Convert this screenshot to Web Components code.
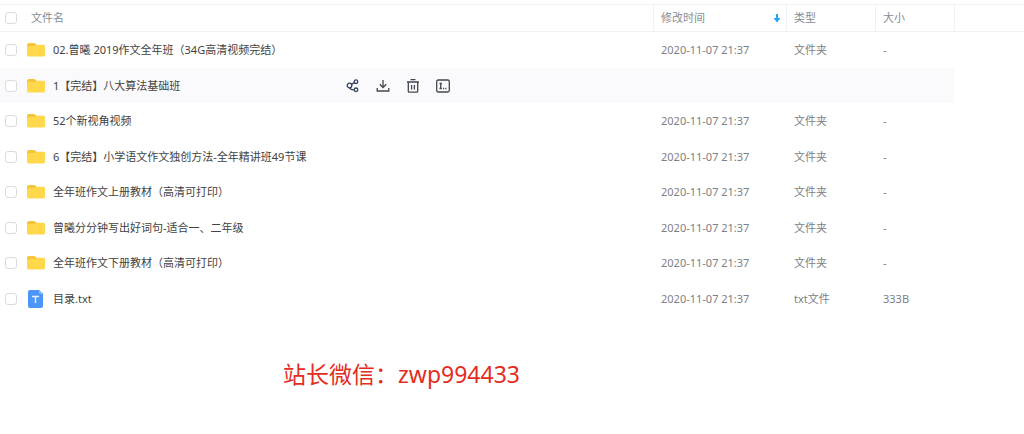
<!DOCTYPE html>
<html lang="zh-CN">
<head>
	<meta charset="utf-8">
	<meta name="viewport" content="width=device-width, initial-scale=1">
	<title>文件列表</title>
	<style>
		body {
			margin: 0;
			padding-top: 4px;
			background: #fff;
			color: #424242;
			font: 11px/16px "Noto Sans", "Noto Sans CJK SC", sans-serif;
		}
	</style>
</head>
<body>
	<uc-file-list></uc-file-list>
	<uc-contact-note>站长微信：zwp994433</uc-contact-note>

	<script>
		const files = [
			{ name: '02.曾曦 2019作文全年班（34G高清视频完结）', kind: 'folder' },
			{ name: '1【完结】八大算法基础班', kind: 'folder', active: true },
			{ name: '52个新视角视频', kind: 'folder' },
			{ name: '6【完结】小学语文作文独创方法-全年精讲班49节课', kind: 'folder' },
			{ name: '全年班作文上册教材（高清可打印）', kind: 'folder' },
			{ name: '曾曦分分钟写出好词句-适合一、二年级', kind: 'folder' },
			{ name: '全年班作文下册教材（高清可打印）', kind: 'folder' },
			{ name: '目录.txt', kind: 'text', size: '333B' }
		];

		class FileIcon extends HTMLElement {
			constructor() {
				super();
				this.attachShadow({ mode: 'open' });
			}

			connectedCallback() {
				const folder = `
					<path fill="#f5c43a" d="M1 3Q1 1 3 1h5q1 0 1.5.8l.8 1H17q2 0 2 2V8H1z"/>
					<path fill="#ffd84b" d="M1 5.500Q1 4 3 4h5.500q.8 0 1.300-.4l.7-.5H17q2 0 2 2V13q0 1.500-2 1.500H3q-2 0-2-1.500z"/>
				`;
				const text = `
					<path fill="#4b96f8" d="M4-1h9l4 4v12q0 2-2 2H4q-2 0-2-2V1q0-2 2-2z"/>
					<path fill="#82b8ff" d="M13-1l4 4h-3q-1 0-1-1z"/>
					<path fill="none" stroke="#e4f0ff" stroke-width="1.4" d="M6 5.500h7M9.500 5.500V12"/>
				`;
				this.shadowRoot.innerHTML = `
					<style>
						:host {
							display: block;
							width: 20px;
							height: 16px;
							flex: none;
						}
						svg {
							display: block;
							overflow: visible;
						}
					</style>
					<svg width="20" height="16" viewBox="0 0 20 16" aria-hidden="true">
						${this.getAttribute('kind') === 'folder' ? folder : text}
					</svg>
				`;
			}
		}

		class RowActions extends HTMLElement {
			constructor() {
				super();
				this.attachShadow({ mode: 'open' });
				this.shadowRoot.innerHTML = `
					<style>
						:host {
							display: flex;
							gap: 16px;
							color: #424750;
						}
						button {
							padding: 0;
							border: 0;
							background: none;
							color: inherit;
							cursor: pointer;
						}
						.share {
							color: #34405e;
						}
						svg {
							display: block;
							fill: none;
							stroke: currentColor;
							stroke-width: 1.3;
						}
					</style>
					<button type="button" class="share" aria-label="分享">
						<svg width="14" height="14" viewBox="0 0 14 14">
							<circle cx="3.5" cy="6.5" r="2.3"/>
							<circle cx="10" cy="2.7" r="1.8"/>
							<circle cx="10" cy="10.8" r="1.8"/>
							<path d="M5.5 5.400L8.400 3.600M3.500 8.800Q5 11 8.200 10.800"/>
						</svg>
					</button>
					<button type="button" aria-label="下载">
						<svg width="14" height="14" viewBox="0 0 14 14">
							<path d="M7 1v7.500M3.800 5.300L7 8.500l3.200-3.200M1.200 9v3h11.600V9"/>
						</svg>
					</button>
					<button type="button" aria-label="删除">
						<svg width="14" height="14" viewBox="0 0 14 14">
							<path d="M4.500.7h5M1 3h12M2.300 3v9.200q0 1 1 1h7.400q1 0 1-1V3M5.600 6v4.500M8.400 6v4.500"/>
						</svg>
					</button>
					<button type="button" aria-label="重命名">
						<svg width="14" height="14" viewBox="0 0 14 14">
							<rect x=".7" y="1" width="12.600" height="12" rx="1.500"/>
							<path d="M3.500 4.500h2.400M4.700 4.500v5M3.500 9.500h2.400M7 9.500h1.200M9.200 9.500h1.200"/>
						</svg>
					</button>
				`;
			}
		}

		class FileList extends HTMLElement {
			constructor() {
				super();
				this.attachShadow({ mode: 'open' });
				this.shadowRoot.innerHTML = `
					<style>
						:host {
							display: block;
						}
						table {
							width: 100%;
							table-layout: fixed;
							border-collapse: separate;
							border-spacing: 0;
						}
						.date { width: 133px; }
						.type { width: 89px; }
						.size { width: 79px; }
						.rest { width: 70px; }
						th, td {
							box-sizing: border-box;
							padding: 0 0 0 8px;
							text-align: left;
							font-weight: normal;
							color: #7d8086;
							white-space: nowrap;
						}
						th {
							height: 28px;
							border-top: 1px solid #f0f1f4;
							border-bottom: 1px solid #f0f1f4;
							color: #888b92;
						}
						th + th {
							border-left: 1px solid #f0f1f4;
							padding-left: 7px;
						}
						td {
							height: 35px;
						}
						tr:nth-child(odd) td {
							height: 36px;
						}
						th:first-child, td:first-child {
							padding-left: 5px;
						}
						.active td:not(:last-child) {
							background: #fafafc;
						}
						.name, .sort {
							display: flex;
							align-items: center;
						}
						.name label {
							margin-left: 7px;
							color: #424242;
						}
						.name.head label {
							margin-left: 14px;
							color: inherit;
						}
						.sort {
							justify-content: space-between;
							padding-right: 5px;
						}
						uc-file-icon {
							margin-left: 9px;
						}
						uc-row-actions {
							margin-left: auto;
							margin-right: 203px;
						}
						input {
							appearance: none;
							flex: none;
							box-sizing: border-box;
							width: 12px;
							height: 12px;
							margin: 0;
							border: 1px solid #d9dbdf;
							border-radius: 3px;
							background: #fff;
						}
						input:checked {
							background: #06a7ff;
						}
					</style>
					<table>
						<thead>
							<tr>
								<th>
									<div class="name head">
										<input type="checkbox" id="all"><label for="all">文件名</label>
									</div>
								</th>
								<th class="date">
									<div class="sort">
										<span>修改时间</span>
										<svg width="8" height="10" viewBox="0 0 8 10" fill="#25a5ee" aria-hidden="true">
											<path d="M3 1h2v4h2.500L4 9.500.5 5H3z"/>
										</svg>
									</div>
								</th>
								<th class="type">类型</th>
								<th class="size">大小</th>
								<th class="rest"></th>
							</tr>
						</thead>
						<tbody></tbody>
					</table>
				`;
			}

			connectedCallback() {
				this.shadowRoot.querySelector('tbody').innerHTML = files.map((file, i) => `
					<tr class="${file.active ? 'active' : ''}">
						<td>
							<div class="name">
								<input type="checkbox" id="file-${i}">
								<uc-file-icon kind="${file.kind}"></uc-file-icon>
								<label for="file-${i}">${file.name}</label>
								${file.active ? '<uc-row-actions></uc-row-actions>' : ''}
							</div>
						</td>
						<td>${file.active ? '' : '2020-11-07 21:37'}</td>
						<td>${file.active ? '' : file.kind === 'folder' ? '文件夹' : 'txt文件'}</td>
						<td>${file.active ? '' : file.size || '-'}</td>
						<td></td>
					</tr>
				`).join('');

				//select all rows from the header
				const all = this.shadowRoot.querySelector('#all');
				all.addEventListener('change', () => {
					this.shadowRoot.querySelectorAll('tbody input').forEach(box => {
						box.checked = all.checked;
					});
				});
			}
		}

		class ContactNote extends HTMLElement {
			constructor() {
				super();
				this.attachShadow({ mode: 'open' });
				this.shadowRoot.innerHTML = `
					<style>
						:host {
							display: block;
							padding: 42px 0 42px 283px;
							color: #e42d22;
							font-size: 23px;
							line-height: 32px;
						}
						p {
							margin: 0;
						}
					</style>
					<p><slot></slot></p>
				`;
			}
		}

		customElements.define('uc-file-icon', FileIcon);
		customElements.define('uc-row-actions', RowActions);
		customElements.define('uc-file-list', FileList);
		customElements.define('uc-contact-note', ContactNote);
	</script>
</body>
</html>
